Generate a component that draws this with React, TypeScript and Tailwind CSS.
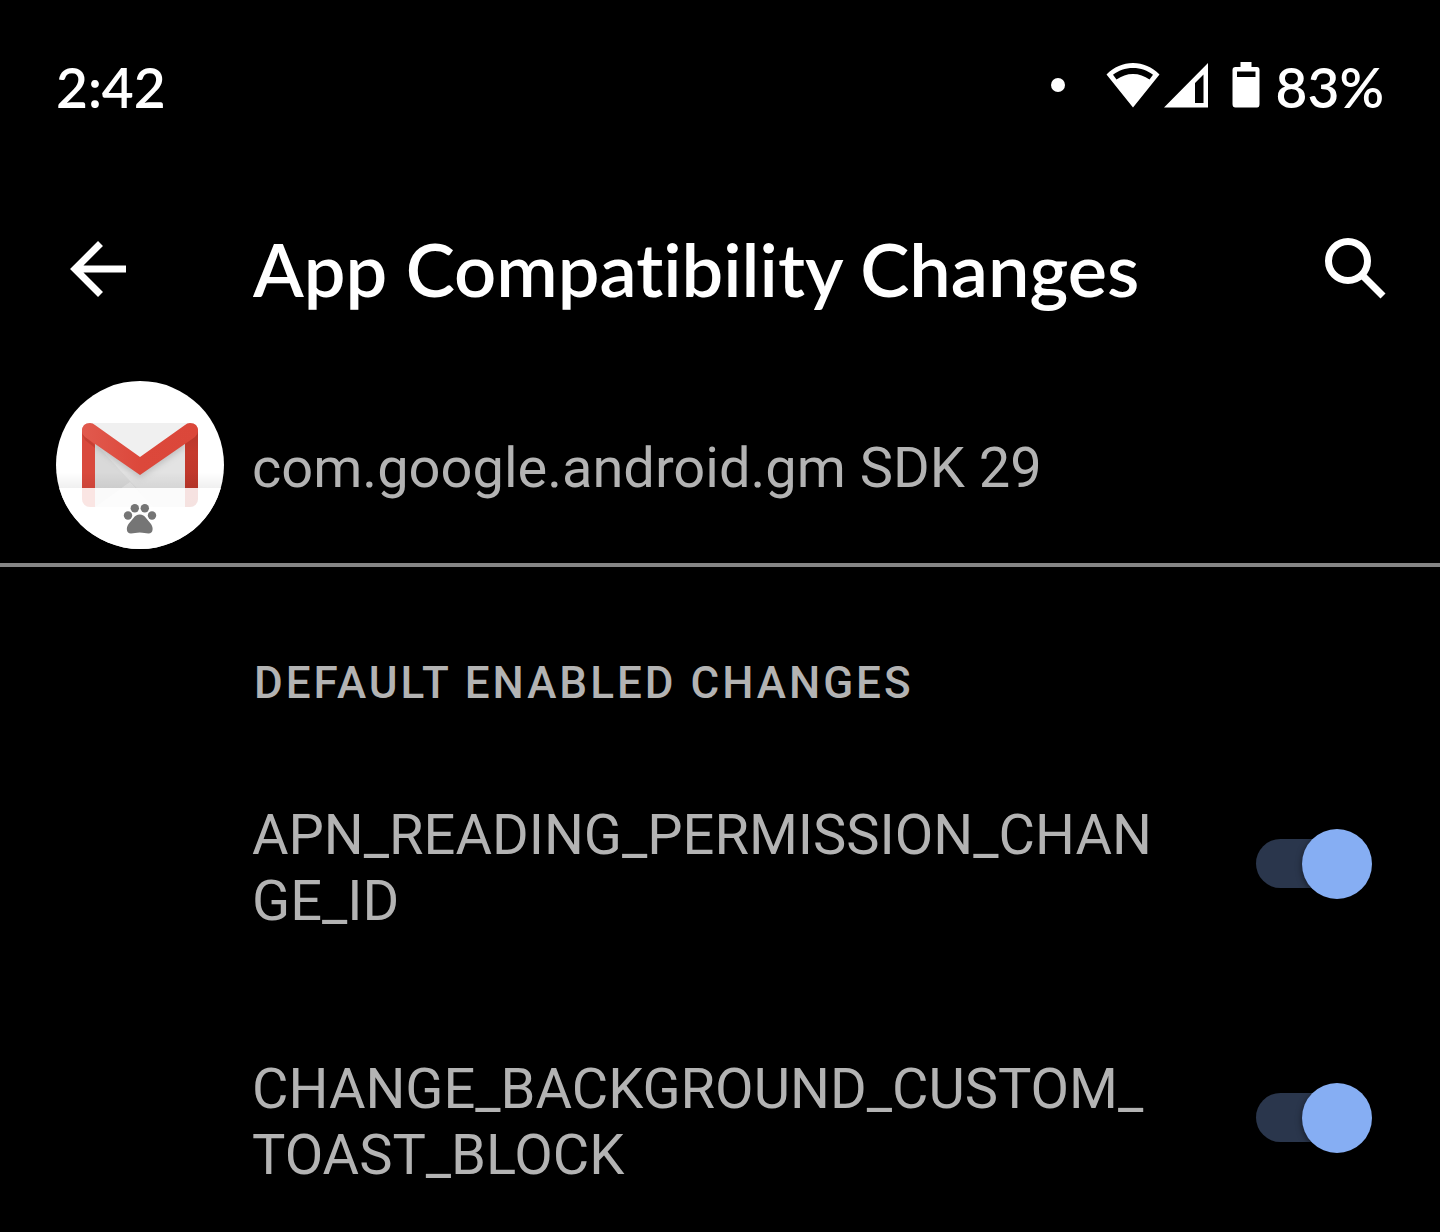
import { useState } from "react";

function WifiIcon() {
  return (
    <svg viewBox="0 0 54 46" className="h-[46px] w-[54px]" aria-hidden="true">
      <path
        fillRule="evenodd"
        fill="#fff"
        d="M27 1C17 1 8 5 .5 12.500L27 45.500L53.500 12.500C46 5 37 1 27 1ZM27 6C35 6 41.500 8.500 47 12.800L43.500 17.500C38.500 14 33 12 27 12C21 12 15.500 14 10.500 17.500L7 12.800C12.500 8.500 19 6 27 6Z"
      />
    </svg>
  );
}

function SignalIcon() {
  return (
    <svg viewBox="0 0 44 46" className="h-[46px] w-[44px]" aria-hidden="true">
      <path fillRule="evenodd" fill="#fff" d="M44 1V45.500H0ZM39.500 12.500L31 21V41H39.500Z" />
    </svg>
  );
}

function BatteryIcon() {
  return (
    <svg viewBox="0 0 28 46" className="h-[46px] w-[28px]" aria-hidden="true">
      <path
        fillRule="evenodd"
        fill="#fff"
        d="M8.500 0H19.500V5H25Q27.500 5 27.500 8V42Q27.500 45.500 25 45.500H3.500Q.5 45.500 .5 42V8Q.5 5 3.500 5H8.500ZM5 9.500V15H23.500V9.500Z"
      />
    </svg>
  );
}

function GmailIcon() {
  return (
    <svg viewBox="0 0 168 168" className="size-[168px] shrink-0" role="img" aria-label="Gmail">
      <defs>
        <clipPath id="disc">
          <circle cx="84" cy="84" r="84" />
        </clipPath>
        <clipPath id="envelope">
          <rect x="26" y="42" width="116" height="84" rx="8" />
        </clipPath>
        <linearGradient id="shade" x1="0" y1="0" x2="0" y2="1">
          <stop offset="0" stopColor="#000" stopOpacity="0" />
          <stop offset="1" stopColor="#000" stopOpacity="0.06" />
        </linearGradient>
        <linearGradient id="rightBar" x1="0" y1="0" x2="0" y2="1">
          <stop offset="0" stopColor="#b5372c" />
          <stop offset="0.3" stopColor="#c53a2d" />
          <stop offset="1" stopColor="#b93529" />
        </linearGradient>
        <linearGradient id="flap" x1="0" y1="0" x2="1" y2="0">
          <stop offset="0" stopColor="#e15a4e" />
          <stop offset="0.5" stopColor="#dc483b" />
          <stop offset="1" stopColor="#db473a" />
        </linearGradient>
        <filter id="soft" x="-20%" y="-20%" width="140%" height="140%">
          <feGaussianBlur stdDeviation="3" />
        </filter>
      </defs>
      <g clipPath="url(#disc)">
        <rect width="168" height="168" fill="#fff" />
        <g clipPath="url(#envelope)">
          <rect x="26" y="42" width="116" height="84" fill="#e3e3e3" />
          <path d="M39 62L98 126H39Z" fill="#d9d9d9" />
          <path d="M39 126L74 101L98 126Z" fill="#e5e5e5" />
          <path d="M39 66L84 97L129 66V58H39Z" fill="#888" opacity="0.4" filter="url(#soft)" />
          <path d="M34 42H134L84 77Z" fill="#f0f0f0" />
          <rect x="26" y="48" width="13" height="78" fill="#d9493d" />
          <rect x="129" y="48" width="13" height="78" fill="url(#rightBar)" />
          <path d="M26 53L39 64V67L29 59Z" fill="#b9382d" opacity="0.6" />
        </g>
        <path
          d="M34 42Q37 42 39 44L84 76L129 44Q131 42 134 42Q142 42 142 50Q142 53 139 56L84 94L29 56Q26 53 26 50Q26 42 34 42Z"
          fill="url(#flap)"
        />
        <rect y="91" width="168" height="16" fill="url(#shade)" />
        <rect y="107" width="168" height="61" fill="#fff" opacity="0.86" />
        <g fill="#757575">
          <circle cx="72" cy="134.500" r="4.200" />
          <circle cx="78.800" cy="127.200" r="4.200" />
          <circle cx="88.800" cy="127.200" r="4.200" />
          <circle cx="96" cy="134.500" r="4.200" />
          <path d="M83.800 133.500C86.500 133.500 88.500 135 90 137L95 143C97.500 146.500 97.500 152.500 92.500 152.500C89.500 152.500 87.500 151.500 83.800 151.500C80 151.500 78 152.500 75 152.500C70 152.500 70 146.500 72.500 143L77.500 137C79 135 81 133.500 83.800 133.500Z" />
        </g>
      </g>
    </svg>
  );
}

function Toggle({ id }: { id: string }) {
  const [on, setOn] = useState(true);
  return (
    <input
      id={id}
      type="checkbox"
      role="switch"
      checked={on}
      onChange={() => setOn(!on)}
      className="relative mb-[10px] h-[49px] w-[116px] shrink-0 cursor-pointer appearance-none before:absolute before:inset-y-0 before:left-0 before:w-[100px] before:rounded-full before:bg-[#2a364c] before:content-[''] after:absolute after:-top-[10px] after:left-0 after:size-[70px] after:rounded-full after:bg-gray-400 after:shadow-[0_2px_6px_rgba(0,0,0,0.5)] after:content-[''] checked:after:left-[46px] checked:after:bg-[#86aef3]"
    />
  );
}

const changes = ["APN_READING_PERMISSION_CHANGE_ID", "CHANGE_BACKGROUND_CUSTOM_TOAST_BLOCK"];

export default function App() {
  return (
    <div className="min-h-screen bg-black font-['Roboto',sans-serif] text-[#b3b3b3]">
      <div className="flex h-[170px] items-center justify-between px-[56px] font-['Lato',sans-serif] text-[55px] leading-[64px] font-semibold text-white">
        <span className="pt-1">2:42</span>
        <div className="flex items-center">
          <span className="mr-[41px] size-[14px] rounded-full bg-white" />
          <WifiIcon />
          <span className="ml-1">
            <SignalIcon />
          </span>
          <span className="ml-6">
            <BatteryIcon />
          </span>
          <span className="ml-4 pt-1">83%</span>
        </div>
      </div>

      <header className="flex h-[198px] items-center px-[54px] text-white">
        <button type="button" aria-label="Back" className="flex w-[199px] shrink-0 pl-4">
          <svg viewBox="0 0 56 56" className="size-14" fill="none" stroke="#fff" strokeWidth="7">
            <path d="M56 28H6M30.500 2.500L5 28L30.500 53.500" />
          </svg>
        </button>
        <h1 className="flex-1 font-['Lato',sans-serif] text-[74px] leading-[88px] font-semibold whitespace-nowrap [font-variant-ligatures:none]">
          App Compatibility Changes
        </h1>
        <button type="button" aria-label="Search">
          <svg viewBox="0 0 62 62" className="size-[62px]" fill="none" stroke="#fff" strokeWidth="7">
            <circle cx="24" cy="23" r="19.500" />
            <path d="M37 36L59 58" />
          </svg>
        </button>
      </header>

      <main>
        <section className="flex items-center border-b-4 border-[#858585] px-[56px] pt-[13px] pb-[14px]">
          <GmailIcon />
          <p className="ml-7 pt-[6px] text-[56px] leading-[66px]">com.google.android.gm SDK 29</p>
        </section>

        <section className="pr-[68px] pl-[252px]">
          <h2 className="pt-[88px] pl-[2px] text-[44px] leading-[56px] font-medium tracking-[3px]">
            DEFAULT ENABLED CHANGES
          </h2>
          <ul className="mt-[91px] flex flex-col gap-[122px]">
            {changes.map((name) => (
              <li key={name} className="flex items-center justify-between gap-[88px]">
                <label htmlFor={name} className="max-w-[915px] min-w-0 text-[56px] leading-[66px] break-all">
                  {name}
                </label>
                <Toggle id={name} />
              </li>
            ))}
          </ul>
        </section>
      </main>
    </div>
  );
}
